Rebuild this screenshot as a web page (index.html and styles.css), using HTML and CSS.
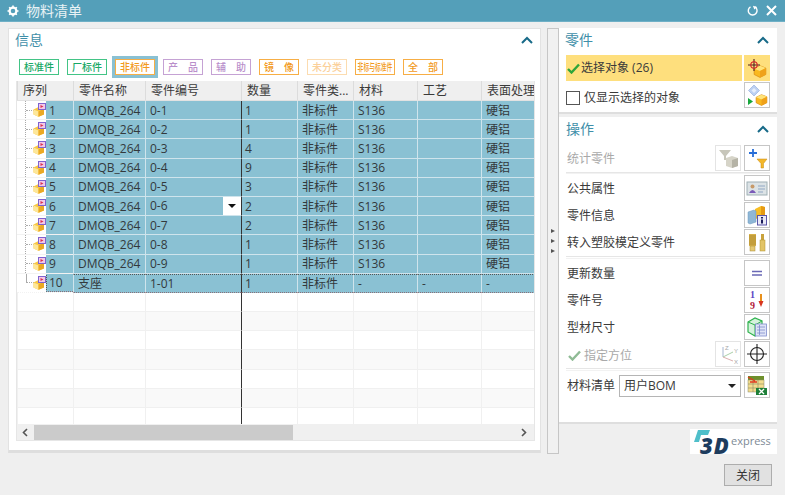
FILE: index.html
```html
<!DOCTYPE html>
<html lang="zh">
<head>
    <meta charset="UTF-8">
    <meta name="viewport" content="width=device-width, initial-scale=1.0">
    <title>物料清单</title>
    <link rel="stylesheet" href="styles.css">
</head>
<body>

<svg class="defs" width="0" height="0">
    <symbol id="part" viewBox="0 0 13 14">
        <path d="M0.5 6.5 L5.5 4 L11 5.5 L11 11.5 L5.5 13.8 L0.5 11.5 Z" fill="#f9c844"/>
        <path d="M0.5 6.5 L5.5 8.5 L5.5 13.8 L0.5 11.5 Z" fill="#fde79a"/>
        <path d="M5.5 8.5 L11 5.5 L11 11.5 L5.5 13.8 Z" fill="#eba924"/>
        <rect x="5.5" y="0.5" width="7" height="6" fill="#f3c9e6" stroke="#7f62cf"/>
        <path d="M7.5 2 L10.5 3.5 L7.5 5 Z" fill="#d9304f"/>
    </symbol>
    <symbol id="cube" viewBox="0 0 12 12">
        <path d="M1 4 L6 1.5 L11 3.5 L11 9 L6 11.5 L1 9 Z" fill="#f9b91f" stroke="#d98a10" stroke-width=".6"/>
        <path d="M1 4 L6 6 L11 3.5 L6 1.5 Z" fill="#ffe37a"/>
        <path d="M6 6 L11 3.5 L11 9 L6 11.5 Z" fill="#efa11a"/>
    </symbol>
</svg>

<header class="titlebar">
    <svg class="gear" width="12" height="12" viewBox="0 0 12 12">
        <circle cx="6" cy="6" r="3.4" fill="none" stroke="#fff" stroke-width="2.2"/>
        <path d="M6 0.5 V2.5 M6 9.5 V11.5 M0.5 6 H2.5 M9.5 6 H11.5 M2.2 2.2 L3.5 3.5 M8.5 8.5 L9.8 9.8 M2.2 9.8 L3.5 8.5 M8.5 3.5 L9.8 2.2" stroke="#fff" stroke-width="1.6"/>
    </svg>
    <span class="title">物料清单</span>
    <svg class="win-btn" width="12" height="12" viewBox="0 0 12 12">
        <path d="M3.5 1.8 A4.4 4.4 0 1 0 8 1.9" fill="none" stroke="#fff" stroke-width="1.4"/>
        <path d="M6.5 0 L6.5 4 L10 2.8 Z" fill="#fff" transform="rotate(-20 8 2)"/>
    </svg>
    <svg class="win-btn" width="11" height="11" viewBox="0 0 11 11">
        <path d="M1 1 L10 10 M10 1 L1 10" stroke="#fff" stroke-width="2"/>
    </svg>
</header>

<div class="main">
    <section class="info-card">
        <div class="panel-head">
            <span class="panel-title">信息</span>
            <svg class="chevron" width="12" height="8" viewBox="0 0 12 8"><path d="M1 7 L6 2 L11 7" fill="none" stroke="#176a88" stroke-width="2"/></svg>
        </div>

        <div class="filters">
            <span class="tag tag-green">标准件</span>
            <span class="tag tag-green">厂标件</span>
            <span class="tag tag-orange tag-active">非标件</span>
            <span class="tag tag-purple">产　品</span>
            <span class="tag tag-purple">辅　助</span>
            <span class="tag tag-orange">镜　像</span>
            <span class="tag tag-pale">未分类</span>
            <span class="tag tag-orange tag-squeezed"><span class="squeeze">非标与标准件</span></span>
            <span class="tag tag-orange">全　部</span>
        </div>

        <div class="grid">
            <div class="grid-row grid-header">
                <div class="cell">序列</div>
                <div class="cell">零件名称</div>
                <div class="cell">零件编号</div>
                <div class="cell">数量</div>
                <div class="cell">零件类...</div>
                <div class="cell">材料</div>
                <div class="cell">工艺</div>
                <div class="cell">表面处理</div>
            </div>
            <div class="grid-body">
                <div class="grid-row selected">
                    <div class="cell seq"><span class="tree"><span class="branch"></span><svg class="part" width="13" height="14"><use href="#part"/></svg></span><span class="seq-no">1</span></div>
                    <div class="cell">DMQB_264</div><div class="cell">0-1</div><div class="cell qty">1</div><div class="cell">非标件</div><div class="cell">S136</div><div class="cell"></div><div class="cell">硬铝</div>
                </div>
                <div class="grid-row selected">
                    <div class="cell seq"><span class="tree"><span class="branch"></span><svg class="part" width="13" height="14"><use href="#part"/></svg></span><span class="seq-no">2</span></div>
                    <div class="cell">DMQB_264</div><div class="cell">0-2</div><div class="cell qty">1</div><div class="cell">非标件</div><div class="cell">S136</div><div class="cell"></div><div class="cell">硬铝</div>
                </div>
                <div class="grid-row selected">
                    <div class="cell seq"><span class="tree"><span class="branch"></span><svg class="part" width="13" height="14"><use href="#part"/></svg></span><span class="seq-no">3</span></div>
                    <div class="cell">DMQB_264</div><div class="cell">0-3</div><div class="cell qty">4</div><div class="cell">非标件</div><div class="cell">S136</div><div class="cell"></div><div class="cell">硬铝</div>
                </div>
                <div class="grid-row selected">
                    <div class="cell seq"><span class="tree"><span class="branch"></span><svg class="part" width="13" height="14"><use href="#part"/></svg></span><span class="seq-no">4</span></div>
                    <div class="cell">DMQB_264</div><div class="cell">0-4</div><div class="cell qty">9</div><div class="cell">非标件</div><div class="cell">S136</div><div class="cell"></div><div class="cell">硬铝</div>
                </div>
                <div class="grid-row selected">
                    <div class="cell seq"><span class="tree"><span class="branch"></span><svg class="part" width="13" height="14"><use href="#part"/></svg></span><span class="seq-no">5</span></div>
                    <div class="cell">DMQB_264</div><div class="cell">0-5</div><div class="cell qty">3</div><div class="cell">非标件</div><div class="cell">S136</div><div class="cell"></div><div class="cell">硬铝</div>
                </div>
                <div class="grid-row selected">
                    <div class="cell seq"><span class="tree"><span class="branch"></span><svg class="part" width="13" height="14"><use href="#part"/></svg></span><span class="seq-no">6</span></div>
                    <div class="cell">DMQB_264</div><div class="cell has-drop">0-6<span class="cell-drop"></span></div><div class="cell qty">2</div><div class="cell">非标件</div><div class="cell">S136</div><div class="cell"></div><div class="cell">硬铝</div>
                </div>
                <div class="grid-row selected">
                    <div class="cell seq"><span class="tree"><span class="branch"></span><svg class="part" width="13" height="14"><use href="#part"/></svg></span><span class="seq-no">7</span></div>
                    <div class="cell">DMQB_264</div><div class="cell">0-7</div><div class="cell qty">2</div><div class="cell">非标件</div><div class="cell">S136</div><div class="cell"></div><div class="cell">硬铝</div>
                </div>
                <div class="grid-row selected">
                    <div class="cell seq"><span class="tree"><span class="branch"></span><svg class="part" width="13" height="14"><use href="#part"/></svg></span><span class="seq-no">8</span></div>
                    <div class="cell">DMQB_264</div><div class="cell">0-8</div><div class="cell qty">1</div><div class="cell">非标件</div><div class="cell">S136</div><div class="cell"></div><div class="cell">硬铝</div>
                </div>
                <div class="grid-row selected">
                    <div class="cell seq"><span class="tree"><span class="branch"></span><svg class="part" width="13" height="14"><use href="#part"/></svg></span><span class="seq-no">9</span></div>
                    <div class="cell">DMQB_264</div><div class="cell">0-9</div><div class="cell qty">1</div><div class="cell">非标件</div><div class="cell">S136</div><div class="cell"></div><div class="cell">硬铝</div>
                </div>
                <div class="grid-row selected focused last">
                    <div class="cell seq"><span class="tree"><span class="branch"></span><svg class="part" width="13" height="14"><use href="#part"/></svg></span><span class="seq-no">10</span></div>
                    <div class="cell">支座</div><div class="cell">1-01</div><div class="cell qty">1</div><div class="cell">非标件</div><div class="cell">-</div><div class="cell">-</div><div class="cell">-</div>
                </div>
                <div class="grid-row empty"><div class="cell"></div><div class="cell"></div><div class="cell"></div><div class="cell qty"></div><div class="cell"></div><div class="cell"></div><div class="cell"></div><div class="cell"></div></div>
                <div class="grid-row empty alt"><div class="cell"></div><div class="cell"></div><div class="cell"></div><div class="cell qty"></div><div class="cell"></div><div class="cell"></div><div class="cell"></div><div class="cell"></div></div>
                <div class="grid-row empty"><div class="cell"></div><div class="cell"></div><div class="cell"></div><div class="cell qty"></div><div class="cell"></div><div class="cell"></div><div class="cell"></div><div class="cell"></div></div>
                <div class="grid-row empty alt"><div class="cell"></div><div class="cell"></div><div class="cell"></div><div class="cell qty"></div><div class="cell"></div><div class="cell"></div><div class="cell"></div><div class="cell"></div></div>
                <div class="grid-row empty"><div class="cell"></div><div class="cell"></div><div class="cell"></div><div class="cell qty"></div><div class="cell"></div><div class="cell"></div><div class="cell"></div><div class="cell"></div></div>
                <div class="grid-row empty alt"><div class="cell"></div><div class="cell"></div><div class="cell"></div><div class="cell qty"></div><div class="cell"></div><div class="cell"></div><div class="cell"></div><div class="cell"></div></div>
                <div class="grid-row empty"><div class="cell"></div><div class="cell"></div><div class="cell"></div><div class="cell qty"></div><div class="cell"></div><div class="cell"></div><div class="cell"></div><div class="cell"></div></div>
            </div>
            <div class="hscroll">
                <svg class="scroll-arrow" width="17" height="17" viewBox="0 0 17 17"><path d="M10 5 L6.5 8.5 L10 12" fill="none" stroke="#555" stroke-width="1.6"/></svg>
                <div class="scroll-thumb"></div>
                <svg class="scroll-arrow scroll-end" width="17" height="17" viewBox="0 0 17 17"><path d="M7 5 L10.5 8.5 L7 12" fill="none" stroke="#555" stroke-width="1.6"/></svg>
            </div>
        </div>
    </section>

    <div class="splitter">
        <span class="split-arrow"></span>
        <span class="split-arrow"></span>
        <span class="split-arrow"></span>
    </div>

    <aside class="side">
        <section class="panel panel-parts">
            <div class="panel-head">
                <span class="panel-title">零件</span>
                <svg class="chevron" width="12" height="8" viewBox="0 0 12 8"><path d="M1 7 L6 2 L11 7" fill="none" stroke="#176a88" stroke-width="2"/></svg>
            </div>
            <div class="row row-picked">
                <div class="pick-label">
                    <svg width="13" height="11" viewBox="0 0 13 11"><path d="M1 6 L4.5 9.5 L12 1.5" fill="none" stroke="#2fa53a" stroke-width="2.4"/></svg>
                    <span>选择对象 (26)</span>
                </div>
                <span class="icon-btn icon-btn-picked">
                    <svg width="22" height="22" viewBox="0 0 22 22">
                        <use href="#cube" x="7" y="7" width="14" height="14"/>
                        <path d="M8 2 V14 M2 8 H14" stroke="#4a1f1f" stroke-width="1.1"/>
                        <circle cx="8" cy="8" r="3.2" fill="none" stroke="#d8202a" stroke-width="1.1"/>
                    </svg>
                </span>
            </div>
            <div class="row">
                <label class="check-label"><span class="checkbox"></span>仅显示选择的对象</label>
                <span class="icon-btn">
                    <svg width="22" height="22" viewBox="0 0 22 22">
                        <path d="M8 1 L13.5 6.5 L8 12 L2.5 6.5 Z" fill="#bcd0f2" stroke="#8ea9dc" stroke-width=".6"/>
                        <path d="M8 4 L10.5 6.5 L8 9 L5.5 6.5 Z" fill="#e6eefb"/>
                        <path d="M2 14 L7 17.5 L2 21 Z" fill="#18a83d"/>
                        <use href="#cube" x="9" y="9" width="13" height="13"/>
                    </svg>
                </span>
            </div>
        </section>

        <section class="panel panel-ops">
            <div class="panel-head">
                <span class="panel-title">操作</span>
                <svg class="chevron" width="12" height="8" viewBox="0 0 12 8"><path d="M1 7 L6 2 L11 7" fill="none" stroke="#176a88" stroke-width="2"/></svg>
            </div>
            <div class="row">
                <span class="label disabled">统计零件</span>
                <span class="icon-btn icon-btn-off">
                    <svg width="22" height="22" viewBox="0 0 22 22">
                        <path d="M2 3 H14 L9 9 V13 H7 V9 Z" fill="#c7c6ba"/>
                        <path d="M9 11 L15 9 L21 11 V19 L15 21 L9 19 Z" fill="#d6d4c8"/>
                        <path d="M15 13 L21 11 V19 L15 21 Z" fill="#b5b3a6"/>
                    </svg>
                </span>
                <span class="icon-btn">
                    <svg width="22" height="22" viewBox="0 0 22 22">
                        <path d="M7 2 V10 M3 6 H11" stroke="#2a6fd8" stroke-width="1.8"/>
                        <path d="M11 12 H21 L17.5 16.5 V21 H15 V16.5 Z" fill="#f3b72a" stroke="#c98a12" stroke-width=".5"/>
                    </svg>
                </span>
            </div>
            <div class="sep sep-tight"></div>
            <div class="row">
                <span class="label">公共属性</span>
                <span class="icon-btn">
                    <svg width="22" height="22" viewBox="0 0 22 22">
                        <rect x="1" y="5" width="20" height="13" fill="#dce3e6" stroke="#9fb0b5"/>
                        <circle cx="6.5" cy="9.5" r="2" fill="#c79a6a"/>
                        <path d="M3 16 Q6.5 10 10 16 Z" fill="#7a5ab8"/>
                        <path d="M12 9 H19 M12 12 H19 M12 15 H17" stroke="#8fa8c4" stroke-width="1.1"/>
                    </svg>
                </span>
            </div>
            <div class="row">
                <span class="label">零件信息</span>
                <span class="icon-btn">
                    <svg width="22" height="22" viewBox="0 0 22 22">
                        <path d="M9 5 L15 2 L19 3 V13 L9 15 Z" fill="#f7bd23"/>
                        <path d="M15 2 L19 3 V13 L15 14 Z" fill="#e69a12"/>
                        <path d="M2 8 L8 6 L10 7 V18 L4 20 L2 19 Z" fill="#8fb7d6" stroke="#6d98bd" stroke-width=".5"/>
                        <rect x="11.5" y="11.5" width="9" height="9.5" fill="#e9e9f6" stroke="#5a55a8"/>
                        <path d="M16 13 V14.4 M16 15.6 V19.5" stroke="#1a1a5a" stroke-width="2"/>
                    </svg>
                </span>
            </div>
            <div class="row">
                <span class="label">转入塑胶模定义零件</span>
                <span class="icon-btn">
                    <svg width="22" height="22" viewBox="0 0 22 22">
                        <rect x="3" y="3" width="7" height="12" fill="#d9b24a"/>
                        <path d="M3 5 H10 M3 7 H10 M3 9 H10 M3 11 H10 M3 13 H10" stroke="#9c7a22" stroke-width=".7"/>
                        <rect x="4" y="15" width="5" height="5" fill="#e4c873" stroke="#a98a30" stroke-width=".5"/>
                        <rect x="15" y="3" width="3" height="6" fill="#c9a23c"/>
                        <rect x="14" y="9" width="5" height="11" fill="#e2c467" stroke="#b0922f" stroke-width=".5"/>
                    </svg>
                </span>
            </div>
            <div class="sep"></div>
            <div class="row">
                <span class="label">更新数量</span>
                <span class="icon-btn">
                    <svg width="22" height="22" viewBox="0 0 22 22"><path d="M6 9.5 H16 M6 13 H16" stroke="#6a68b5" stroke-width="1.6"/></svg>
                </span>
            </div>
            <div class="row">
                <span class="label">零件号</span>
                <span class="icon-btn">
                    <svg width="22" height="22" viewBox="0 0 22 22">
                        <text class="icon-digit digit-one" x="4" y="8.5">1</text>
                        <text class="icon-digit digit-nine" x="4" y="19.7">9</text>
                        <path d="M15 5 V13" stroke="#e8901c" stroke-width="2"/>
                        <path d="M12.5 12 L15 18 L17.5 12 Z" fill="#d8361f"/>
                    </svg>
                </span>
            </div>
            <div class="row">
                <span class="label">型材尺寸</span>
                <span class="icon-btn">
                    <svg width="22" height="22" viewBox="0 0 22 22">
                        <path d="M2 6 L9 2 L16 5 V15 L9 20 L2 16 Z" fill="#d5f3dc" stroke="#2fb24e" stroke-width="1.2"/>
                        <path d="M2 6 L9 9 L16 5 M9 9 V20" fill="none" stroke="#2fb24e" stroke-width="1"/>
                        <rect x="9.5" y="8" width="11" height="12" fill="#dfe4f7" stroke="#7f8ccc" stroke-width=".8"/>
                        <path d="M11 11 H19 M11 14 H19 M11 17 H19 M13.5 9 V19" stroke="#7f8ccc" stroke-width=".8"/>
                    </svg>
                </span>
            </div>
            <div class="row">
                <div class="orient-label">
                    <svg width="13" height="11" viewBox="0 0 13 11"><path d="M1 6 L4.5 9.5 L12 1.5" fill="none" stroke="#8fbb95" stroke-width="2.4"/></svg>
                    <span class="disabled">指定方位</span>
                </div>
                <span class="icon-btn icon-btn-off">
                    <svg width="24" height="24" viewBox="0 0 24 24">
                        <path d="M7 15 V5" stroke="#a6b6d2"/><path d="M7 15 L17 10" stroke="#a9cfa9"/><path d="M7 15 L17 19" stroke="#dbb0b0"/>
                        <text class="axis-letter" x="9" y="8">Z</text>
                        <text class="axis-letter" x="18" y="11">Y</text>
                        <text class="axis-letter" x="18" y="22">X</text>
                    </svg>
                </span>
                <span class="icon-btn">
                    <svg width="24" height="24" viewBox="0 0 24 24">
                        <circle cx="12" cy="12" r="6.5" fill="none" stroke="#222" stroke-width="1.1"/>
                        <path d="M12 2 V22 M2 12 H22" stroke="#222" stroke-width="1.1"/>
                    </svg>
                </span>
            </div>
            <div class="sep"></div>
            <div class="row">
                <span class="label label-bom">材料清单</span>
                <div class="select">用户BOM<span class="caret"></span></div>
                <span class="icon-btn">
                    <svg width="22" height="22" viewBox="0 0 22 22">
                        <rect x="2" y="2" width="16" height="4" fill="#6d8f2b"/>
                        <rect x="2" y="6" width="16" height="12" fill="#f3dc8c" stroke="#8a8a6a" stroke-width=".5"/>
                        <path d="M2 10 H18 M2 14 H18 M7 6 V18 M12 6 V18" stroke="#8a8a6a" stroke-width=".6"/>
                        <path d="M2 3 L9 7 M4 8 H11" stroke="#e0381f" stroke-width="1.4"/>
                        <path d="M10 14 H21 V21 H10 Z" fill="#1d7f38"/>
                        <path d="M13 15 L18 20 M18 15 L13 20" stroke="#fff" stroke-width="1.3"/>
                    </svg>
                </span>
            </div>
        </section>

        <div class="logo">
            <svg width="17" height="13" viewBox="0 0 17 13" class="logo-mark"><path d="M4 0 H16 L14 5 H7 L5 12 H0 Z" fill="#4fbfca"/></svg>
            <span class="logo-3d">3D</span>
            <span class="logo-word">express</span>
        </div>
    </aside>
</div>

<footer class="footer">
    <button class="btn-close">关闭</button>
</footer>

</body>
</html>
```
FILE: styles.css
```css
* {
    box-sizing: border-box;
}

body {
    margin: 0;
    width: 785px;
    height: 495px;
    overflow: hidden;
    background-color: #efefef;
    color: #3a3a3a;
    font-family: "Open Sans", "Noto Sans CJK SC", sans-serif;
    font-size: 12px;
    line-height: 1;
}

.defs {
    display: block;
    height: 0;
}

.titlebar {
    display: flex;
    align-items: center;
    height: 22px;
    padding: 0 8px 0 7px;
    background-color: #549fb9;
    border-bottom: 1px solid #6fb0c6;
    color: #e8f2f5;
}

.gear {
    margin-right: 7px;
}

.title {
    flex: 1;
    font-size: 14px;
}

.win-btn {
    margin-left: 7px;
}

.main {
    display: flex;
    height: 432px;
    padding: 6px 8px 0 8px;
}

.info-card {
    width: 533px;
    height: 425px;
    padding: 0 5px 0 7px;
    background-color: #fff;
    border: 1px solid #e2e2e2;
    border-bottom: 3px solid #dedede;
}

.panel-head {
    display: flex;
    align-items: center;
    justify-content: space-between;
    height: 27px;
    padding-bottom: 4px;
}

.panel-title {
    color: #3f8fa9;
    font-size: 14px;
}

.chevron {
    margin-right: 1px;
}

.info-card .panel-head {
    margin-left: -1px;
    height: 24px;
    padding-bottom: 2px;
}

.info-card .chevron {
    margin-right: 2px;
}

.filters {
    display: flex;
    align-items: center;
    gap: 8px;
    height: 27px;
    margin-left: 3px;
    margin-bottom: 1px;
}

.tag {
    display: flex;
    align-items: center;
    justify-content: center;
    width: 40px;
    height: 16px;
    background-color: #fff;
    border: 1px solid;
    font-size: 10px;
    font-weight: 500;
    white-space: nowrap;
    overflow: hidden;
}

.tag-green {
    border-color: #43c486;
    color: #18a865;
}

.tag-orange {
    border-color: #f7ae45;
    color: #f29a1c;
}

.tag-purple {
    border-color: #c5a2d4;
    color: #b98fcb;
}

.tag-pale {
    border-color: #fcdcb0;
    color: #fbd09a;
}

.tag-active {
    box-shadow: 0 0 0 3px #8ac1d3;
}

.tag-squeezed {
    overflow: visible;
}

.squeeze {
    flex: none;
    transform: scaleX(.58);
}

.grid {
    height: 360px;
    overflow: hidden;
    border: 1px solid #e6e6e6;
    border-width: 0 1px 1px 1px;
    background-color: #fff;
}

.grid-row {
    display: grid;
    grid-template-columns: 56px 72px 96px 56px 56px 64px 64px 56px;
    width: 520px;
    height: 19.2px;
}

.grid-header {
    height: 20px;
    background-color: #efefef;
    border-bottom: 1px solid #e2e2e2;
}

.grid-header .cell {
    padding-left: 5px;
    border-left: 1px solid #dcdcdc;
    border-bottom: none;
}

.grid-body {
    height: 323px;
    overflow: hidden;
}

.cell {
    display: flex;
    align-items: center;
    padding-top: 1px;
    padding-left: 4px;
    white-space: nowrap;
    overflow: hidden;
    border-left: 1px solid #f0f0f0;
    border-bottom: 1px solid #f0f0f0;
}

.qty {
    border-left: 1px solid #333;
    padding-left: 3px;
}

.selected .cell {
    background-color: #8ac1d3;
    border-left-color: #cfe4ec;
    border-bottom-color: #cfe4ec;
    color: #33393c;
}

.selected .qty {
    border-left-color: #333;
}

.selected .seq {
    padding: 0;
    border-left: none;
    background-color: #fff;
    border-bottom-color: #f2f2f2;
}

.tree {
    display: flex;
    flex: none;
    align-items: center;
    width: 21px;
    height: calc(100% + 1px);
    margin-left: 8px;
    border-left: 1px dotted #aaa;
}

.branch {
    flex: none;
    width: 8px;
    height: 1px;
    border-bottom: 1px dotted #aaa;
}

.part {
    flex: none;
    margin-left: -1px;
}

.seq-no {
    display: flex;
    align-items: center;
    flex: 1;
    height: 100%;
    padding: 1px 0 0 3px;
    background-color: #8ac1d3;
}

.last .tree {
    border-left-color: transparent;
    background: linear-gradient(#aaa 50%, transparent 50%) 0 0 / 1px 100% no-repeat;
}

.focused .cell {
    border-top: 1px dotted #555;
    border-bottom: 1px dotted #8a7078;
}

.focused .seq {
    border-top: none;
    border-bottom-color: #f2f2f2;
}

.focused .seq-no {
    height: calc(100% + 1px);
    padding-left: 2px;
    border-top: 1px dotted #555;
    border-bottom: 1px dotted #8a7078;
    border-left: 1px dotted #555;
}

.has-drop {
    justify-content: space-between;
    padding-top: 0;
    padding-right: 0;
}

.cell-drop {
    position: relative;
    width: 18px;
    height: 100%;
    background-color: #fff;
}

.cell-drop::after {
    content: "";
    position: absolute;
    left: 5px;
    top: 7px;
    border-style: solid;
    border-width: 4px 4px 0 4px;
    border-color: #111 transparent transparent transparent;
}

.alt .cell {
    background-color: #f9f9f9;
}

.hscroll {
    display: flex;
    height: 17px;
    background-color: #f0f0f0;
}

.scroll-thumb {
    width: 259px;
    margin: 1px 0;
    background-color: #cbcbcb;
}

.scroll-end {
    margin-left: auto;
    margin-right: 2px;
}

.splitter {
    display: flex;
    flex-direction: column;
    align-items: center;
    justify-content: center;
    gap: 6px;
    flex: none;
    width: 12px;
    height: 426px;
    margin-left: 6px;
    background-color: #f1f1f1;
    border: 1px solid #c6c6c6;
}

.split-arrow {
    border-style: solid;
    border-width: 2.5px 0 2.5px 4px;
    border-color: transparent transparent transparent #555;
}

.side {
    display: flex;
    flex-direction: column;
    flex: none;
    width: 218px;
}

.panel {
    padding: 0 7px;
    background-color: #fff;
    border-bottom: 2px solid #dedede;
}

.panel-parts {
    height: 86px;
    margin-bottom: 3px;
}

.panel-parts .panel-title {
    margin-left: -1px;
}

.panel-ops {
    display: flex;
    flex-direction: column;
    gap: 1px;
    height: 307px;
    margin-bottom: 5px;
}

.row {
    display: flex;
    align-items: center;
    justify-content: flex-end;
    gap: 3px;
    height: 26px;
    margin-bottom: 1px;
}

.panel-ops .row {
    margin-bottom: 0;
    padding-left: 1px;
}

.label {
    flex: 1;
    padding-top: 1px;
}

.disabled {
    color: #a9a9a9;
}

.row-picked {
    gap: 2px;
}

.pick-label {
    display: flex;
    align-items: center;
    gap: 1px;
    flex: 1;
    height: 100%;
    padding-left: 1px;
    background-color: #fedf7d;
}

.icon-btn {
    display: flex;
    align-items: center;
    justify-content: center;
    flex: none;
    width: 26px;
    height: 26px;
    background-color: #fff;
    border: 1px solid #c6c6c6;
}

.icon-btn-off {
    border-color: #e4e4e4;
}

.icon-btn-picked {
    background-color: #fedf7d;
    border-color: #fedf7d;
}

.check-label {
    display: flex;
    align-items: center;
    flex: 1;
    gap: 4px;
    padding-top: 6px;
}

.checkbox {
    width: 14px;
    height: 14px;
    background-color: #fff;
    border: 1px solid #555;
}

.orient-label {
    display: flex;
    align-items: center;
    gap: 3px;
    flex: 1;
    padding: 3px 0 0 1px;
}

.sep {
    flex: none;
    height: 3px;
    border-top: 1px solid #e6e6e6;
    border-bottom: 1px solid #f2f2f2;
}

.sep-tight {
    height: 2px;
}

.label-bom {
    flex: none;
}

.select {
    display: flex;
    align-items: center;
    justify-content: space-between;
    flex: 1;
    height: 22px;
    margin: 2px 0 0 1px;
    padding: 0 4px;
    background-color: #fff;
    border: 1px solid #b5b5b5;
}

.caret {
    border-style: solid;
    border-width: 4px 4px 0 4px;
    border-color: #222 transparent transparent transparent;
}

.icon-digit {
    font-family: "Liberation Serif", serif;
    font-size: 10px;
    font-weight: bold;
}

.digit-one {
    fill: #5b45c4;
}

.digit-nine {
    fill: #b3203a;
}

.axis-letter {
    font-family: "Liberation Sans", sans-serif;
    font-size: 6px;
    fill: #a8a8a8;
}

.logo {
    position: relative;
    align-self: flex-end;
    width: 87px;
    height: 25px;
    background-color: #fff;
}

.logo-mark {
    position: absolute;
    left: 4px;
    top: 1px;
}

.logo-3d {
    position: absolute;
    left: 10px;
    top: 8px;
    color: #1d3c5e;
    font-size: 22px;
    font-style: italic;
    font-weight: 800;
    letter-spacing: 1px;
    line-height: 17px;
}

.logo-word {
    position: absolute;
    left: 41px;
    top: 6px;
    color: #7d8a96;
    font-size: 11px;
}

.footer {
    display: flex;
    justify-content: flex-end;
    padding: 10px 13px 0 0;
}

.btn-close {
    width: 48px;
    height: 22px;
    padding: 0;
    background-color: #e1e1e1;
    border: 1px solid #adadad;
    color: #333;
    font-family: inherit;
    font-size: 12px;
}
```
